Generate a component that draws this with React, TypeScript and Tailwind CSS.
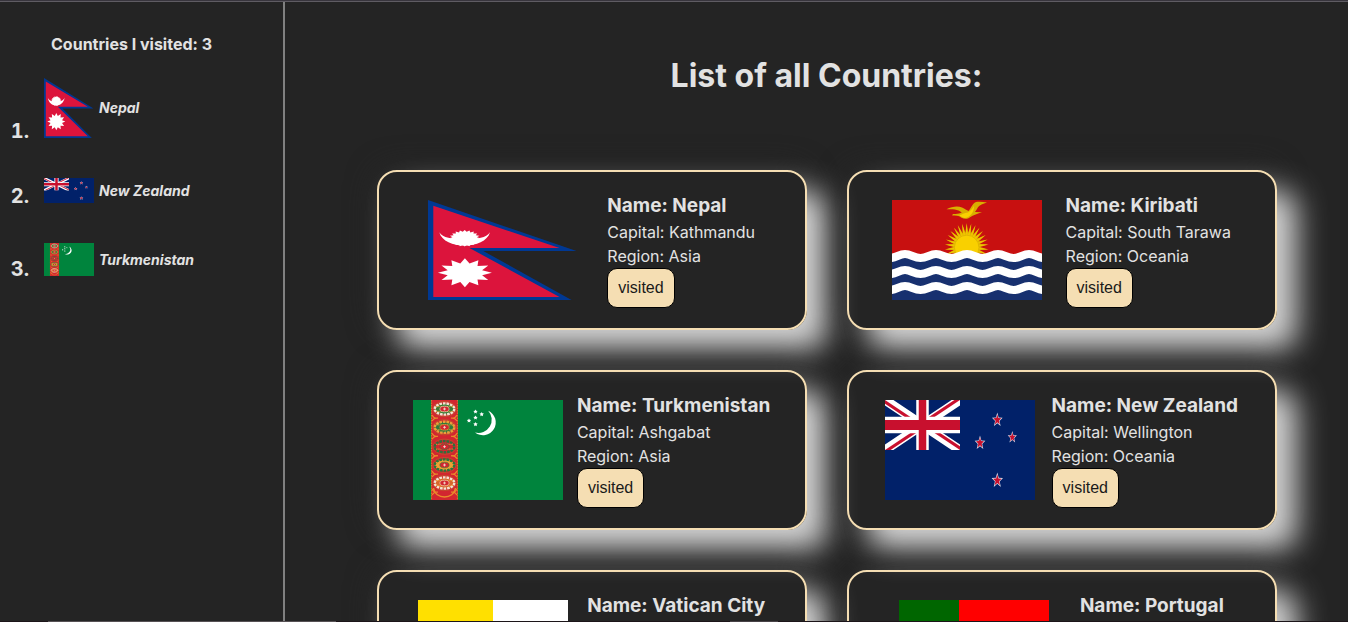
import type { ReactElement } from "react";

type FlagProps = { className: string; label: string };
type Flag = (props: FlagProps) => ReactElement;

function burst(cx: number, cy: number, rx: number, ry: number, points: number, inner: number): string {
  return Array.from({ length: points * 2 }, (_, i) => {
    const k = i % 2 === 0 ? 1 : inner;
    const a = (Math.PI * i) / points - Math.PI / 2;
    return `${(cx + Math.cos(a) * rx * k).toFixed(2)},${(cy + Math.sin(a) * ry * k).toFixed(2)}`;
  }).join(" ");
}

function wave(y: number): string {
  let d = `M-18 ${y - 2}`;
  for (let x = -18; x < 160; x += 31) {
    d += ` C${x + 6} ${y - 2} ${x + 9} ${y + 2} ${x + 15.5} ${y + 2} S${x + 25} ${y - 2} ${x + 31} ${y - 2}`;
  }
  return d;
}

const NepalFlag: Flag = ({ className, label }) => (
  <svg viewBox="0 0 150 100" preserveAspectRatio="none" role="img" aria-label={label} className={className}>
    <path fill="#003893" d="M0 0L148.5 51H55.3L143.5 100H0Z" />
    <path fill="#dc143c" d="M5.3 5.7L131.5 48H41.5L131.5 97H5.3Z" />
    <path fill="#fff" d="M11.3 32.3C16 50.2 57 50.2 62 32.3C58 38 50 39.2 36.7 39.2S15 38 11.3 32.3Z" />
    <polygon fill="#fff" points={burst(36.7, 38.3, 15.5, 8.3, 20, 0.8)} />
    <polygon fill="#fff" points={burst(36.9, 72.7, 27, 14.5, 12, 0.66)} />
  </svg>
);

const KiribatiFlag: Flag = ({ className, label }) => (
  <svg viewBox="0 0 150 100" preserveAspectRatio="none" role="img" aria-label={label} className={className}>
    <path fill="#c81010" d="M0 0H150V58H0Z" />
    <polygon fill="#d9ae00" points={burst(74.7, 47, 22, 24, 30, 0.6)} />
    <polygon fill="#f0c400" points={burst(74.7, 47, 21, 23, 30, 0.52)} />
    <circle cx="74.7" cy="47.5" r="12.3" fill="#f9d000" stroke="#d9ae00" strokeWidth="0.7" />
    <path
      fill="#d9ae00"
      d="M54.5 9.3C60 6.4 66 5.6 70 7.6C73 9 74.5 10.5 76.5 11C79 8.6 80 4 84 2.1C87 1.2 91 2 95 2.4C91 4 87.5 4.5 86 7.2C85 9 84 10.6 83 11.9L90 12.3C86 13.8 81 14.9 78 17.3C75.5 19.3 72 19.2 69.5 17.7C66.5 15.5 63.5 15.8 60.3 15.6C60 14.6 60.8 14 62 14C65.5 14.2 68 13.6 69.8 12.6C66 9 60 9.4 54.5 9.3Z"
    />
    <path fill="#f9d000" d="M67 15.2C70 14.6 72 12.7 76 12.4C79 11 80.5 8 82 6C82 9.5 81 12 79.5 14C76 18.4 72 18.7 69.5 16.8C68.5 16 68 15.6 67 15.2Z" />
    <path fill="#17306f" d={`${wave(57)} V104H-18Z`} />
    <g fill="none" stroke="#fff" strokeWidth="8.2">
      <path d={wave(56)} />
      <path d={wave(72)} />
      <path d={wave(88)} />
    </g>
  </svg>
);

const GULS = [
  { y: 9, rim: "#f3e3d0", core: "#3b7a35" },
  { y: 27.3, rim: "#e8a13a", core: "#2f7a3d" },
  { y: 46.7, rim: "#2f6f3d", core: "#d22630" },
  { y: 65, rim: "#267a3c", core: "#f0a033" },
  { y: 83, rim: "#f3e3d0", core: "#d8662c" },
];

const TurkmenistanFlag: Flag = ({ className, label }) => (
  <svg viewBox="0 0 150 100" preserveAspectRatio="none" role="img" aria-label={label} className={className}>
    <path fill="#00843d" d="M0 0H150V100H0Z" />
    <path fill="#d22630" d="M18 0H45V100H18Z" />
    <path fill="none" stroke="#c8842c" strokeWidth="1" strokeDasharray="1.5 1" d="M18.6 0V100M44.4 0V100" />
    {GULS.map((g) => (
      <g key={g.y}>
        <path
          fill="none"
          stroke="#e98a2b"
          strokeWidth="1.1"
          d={`M19 ${g.y + 6}Q21 ${g.y + 10} 25 ${g.y + 9}M19 ${g.y + 12}Q21 ${g.y + 8.5} 25 ${g.y + 9}M44 ${g.y + 6}Q42 ${g.y + 10} 38 ${g.y + 9}M44 ${g.y + 12}Q42 ${g.y + 8.5} 38 ${g.y + 9}`}
        />
        <ellipse cx="31.5" cy={g.y} rx="11.6" ry="7.6" fill="#d22630" stroke="#b7662c" strokeWidth="0.6" />
        <ellipse cx="31.5" cy={g.y} rx="9.8" ry="5.6" fill={g.core} stroke={g.rim} strokeWidth="2.4" strokeDasharray="2.6 0.9" />
        <path stroke="#f0a033" strokeWidth="0.9" strokeDasharray="1.4 0.8" d={`M23 ${g.y - 2.4}H40M23 ${g.y + 2.4}H40`} />
        <ellipse cx="31.5" cy={g.y} rx="4.6" ry="2.8" fill="#d22630" stroke={g.rim} strokeWidth="0.6" />
        <path stroke="#f3e3d0" strokeWidth="0.8" d={`M30 ${g.y}H33M31.5 ${g.y - 1.4}V${g.y + 1.4}`} />
      </g>
    ))}
    <path fill="none" stroke="#e98a2b" strokeWidth="1.5" d="M20.5 88C22 100 41 100 42.5 88" />
    <path fill="#fff" d="M75.2 10.7A12.8 12.8 0 1 1 62 32.4A13.2 13.2 0 0 0 75.2 10.7Z" />
    {[[62.5, 11.7], [68.7, 14.3], [62.5, 17.7], [56, 20.7], [62.5, 24.3]].map(([x, y]) => (
      <polygon key={`${x}-${y}`} fill="#fff" points={burst(x, y, 2.3, 2.3, 5, 0.5)} />
    ))}
  </svg>
);

const NewZealandFlag: Flag = ({ className, label }) => (
  <svg viewBox="0 0 150 100" preserveAspectRatio="none" role="img" aria-label={label} className={className}>
    <path fill="#012169" d="M0 0H150V100H0Z" />
    <svg width="75" height="50" viewBox="0 0 60 30" preserveAspectRatio="none">
      <clipPath id="saltire">
        <path d="M30 15H60V30ZM30 15V30H0ZM30 15H0V0ZM30 15V0H60Z" />
      </clipPath>
      <path stroke="#fff" strokeWidth="6" d="M0 0L60 30M60 0L0 30" />
      <path clipPath="url(#saltire)" stroke="#c8102e" strokeWidth="4" d="M0 0L60 30M60 0L0 30" />
      <path stroke="#fff" strokeWidth="10" d="M30 0V30M0 15H60" />
      <path stroke="#c8102e" strokeWidth="6" d="M30 0V30M0 15H60" />
    </svg>
    {[[112.3, 20, 5.6], [127.3, 37.3, 4.8], [95, 43, 5.6], [112.3, 80.5, 6]].map(([x, y, r]) => (
      <g key={`${x}-${y}`}>
        <polygon fill="#dfe3ee" points={burst(x, y, r, r * 1.33, 5, 0.42)} />
        <polygon fill="#c8102e" points={burst(x, y, r * 0.75, r, 5, 0.42)} />
      </g>
    ))}
  </svg>
);

const VaticanFlag: Flag = ({ className, label }) => (
  <svg viewBox="0 0 150 100" preserveAspectRatio="none" role="img" aria-label={label} className={className}>
    <path fill="#ffe000" d="M0 0H75V100H0Z" />
    <path fill="#fff" d="M75 0H150V100H75Z" />
  </svg>
);

const PortugalFlag: Flag = ({ className, label }) => (
  <svg viewBox="0 0 150 100" preserveAspectRatio="none" role="img" aria-label={label} className={className}>
    <path fill="#060" d="M0 0H60V100H0Z" />
    <path fill="#f00" d="M60 0H150V100H60Z" />
    <circle cx="60" cy="50" r="19" fill="#ff0" />
    <path fill="#f00" stroke="#fff" strokeWidth="2" d="M49 38H71V54Q71 63 60 63T49 54Z" />
  </svg>
);

type Country = { name: string; capital: string; region: string; flag: Flag };

const countries: Country[] = [
  { name: "Nepal", capital: "Kathmandu", region: "Asia", flag: NepalFlag },
  { name: "Kiribati", capital: "South Tarawa", region: "Oceania", flag: KiribatiFlag },
  { name: "Turkmenistan", capital: "Ashgabat", region: "Asia", flag: TurkmenistanFlag },
  { name: "New Zealand", capital: "Wellington", region: "Oceania", flag: NewZealandFlag },
  { name: "Vatican City", capital: "Vatican City", region: "Europe", flag: VaticanFlag },
  { name: "Portugal", capital: "Lisbon", region: "Europe", flag: PortugalFlag },
];

const visited = [
  { name: "Nepal", flag: NepalFlag, size: "block h-[60px] w-[50px]" },
  { name: "New Zealand", flag: NewZealandFlag, size: "block h-[25px] w-[50px]" },
  { name: "Turkmenistan", flag: TurkmenistanFlag, size: "block h-[33px] w-[50px]" },
];

function Sidebar() {
  return (
    <aside className="w-[285px] shrink-0 border-r-2 border-[#808080] pt-[30px]">
      <h4 className="pr-5 text-center text-base font-[650]">Countries I visited: {visited.length}</h4>
      <ol className="mt-[22px] flex flex-col gap-10">
        {visited.map(({ name, flag: FlagImage, size }, i) => (
          <li key={name} className="flex items-end">
            <span className="mr-[15px] -mb-[3px] w-[29px] text-right text-xl leading-none font-bold tabular-nums">{i + 1}.</span>
            <div className="flex items-center gap-[5px]">
              <FlagImage className={size} label={`Flag of ${name}`} />
              <span className="text-sm leading-5 font-bold italic">{name}</span>
            </div>
          </li>
        ))}
      </ol>
    </aside>
  );
}

function CountryCard({ name, capital, region, flag: FlagImage }: Country) {
  return (
    <article className="flex h-40 items-center justify-evenly rounded-[20px] border-2 border-[#f5deb3] px-5 shadow-[20px_20px_30px_#d3d3d3,0_0_30px_#292929]">
      <FlagImage className="block h-[100px] w-[150px] shrink-0" label={`Flag of ${name}`} />
      <div className="flex flex-col items-start">
        <h3 className="text-[19px] leading-7 font-[650]">Name: {name}</h3>
        <p>Capital: {capital}</p>
        <p>Region: {region}</p>
        <button
          type="button"
          className="rounded-[10px] border border-black bg-[#f5deb3] px-2.5 py-2.5 font-['Liberation_Sans',Arial,sans-serif] text-base leading-[18px] text-[#1a1a1a]"
        >
          visited
        </button>
      </div>
    </article>
  );
}

export default function App() {
  return (
    <div className="flex h-screen flex-col overflow-hidden bg-[#242424] font-[Inter,sans-serif] text-base leading-6 text-[#e2e2e2]">
      <div className="h-0.5 shrink-0 border-t border-b border-t-[#38353d] border-b-[#5f5c63]" />
      <div className="flex min-h-0 flex-1">
        <Sidebar />
        <main className="flex min-w-0 flex-1 flex-col items-center overflow-y-auto pt-[54px] pl-5 [scrollbar-width:none]">
          <h1 className="text-[32px] leading-10 font-bold">List of all Countries:</h1>
          <section className="mt-[74px] grid grid-cols-[430px_430px] gap-10 pb-16">
            {countries.map((country) => (
              <CountryCard key={country.name} {...country} />
            ))}
          </section>
        </main>
      </div>
      <div className="flex h-px shrink-0 bg-[#1c1519]">
        <div className="ml-12 w-72 bg-[#565154]" />
        <div className="ml-[394px] w-12 bg-[#474246]" />
      </div>
    </div>
  );
}
